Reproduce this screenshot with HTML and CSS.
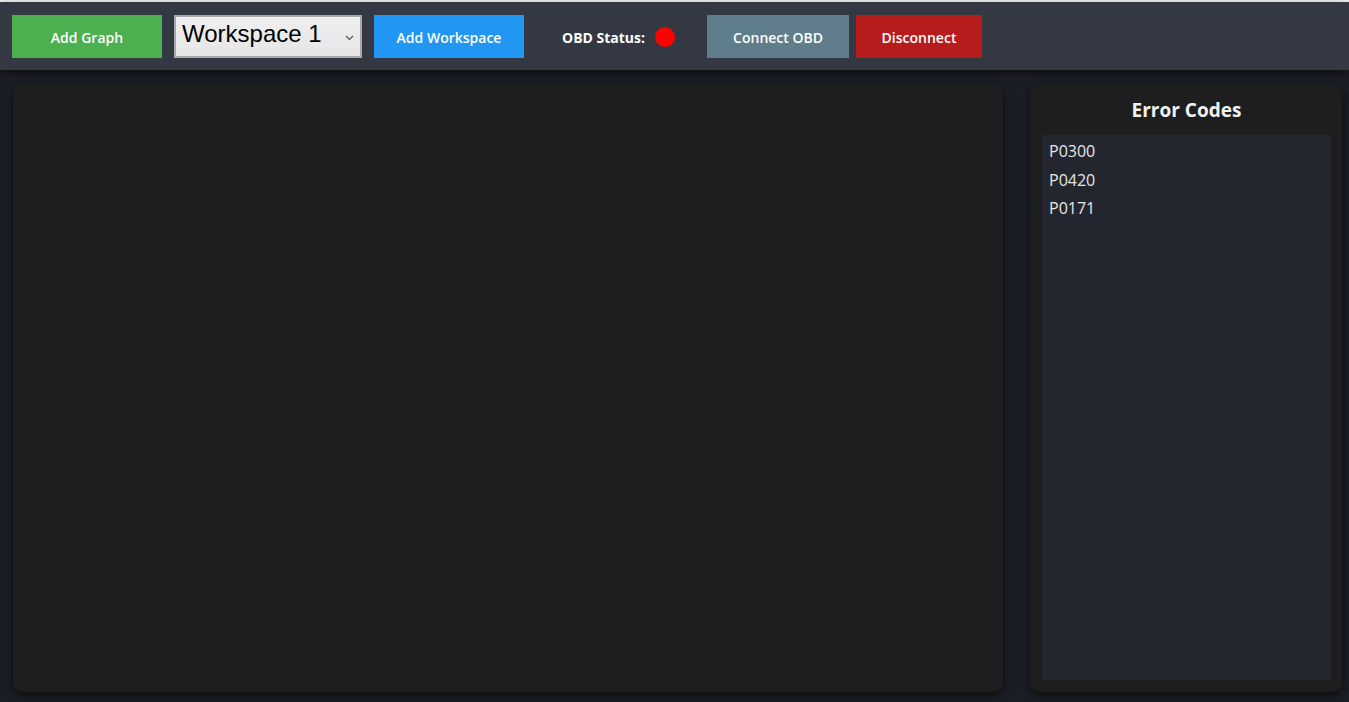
FILE: index.html
```html
<!DOCTYPE html>
<html lang="en">
<head>
<meta charset="utf-8">
<title>OBD Dashboard</title>
<link rel="stylesheet" href="styles.css">
</head>
<body>
<div class="topline"></div>
<header class="toolbar">
  <button class="btn btn-green">Add Graph</button>
  <div class="select-wrap">
    <select class="ws-select">
      <option>Workspace 1</option>
    </select>
    <svg class="chev" width="9" height="6" viewBox="0 0 9 6"><path d="M1 1 L4.5 4.5 L8 1" fill="none" stroke="#555" stroke-width="1.2"/></svg>
  </div>
  <button class="btn btn-blue">Add Workspace</button>
  <div class="status">
    <span class="status-label">OBD Status:</span>
    <span class="dot"></span>
  </div>
  <button class="btn btn-slate">Connect OBD</button>
  <button class="btn btn-red">Disconnect</button>
</header>
<main class="content">
  <section class="workspace"></section>
  <aside class="errors">
    <h2 class="errors-title">Error Codes</h2>
    <ul class="error-list">
      <li>P0300</li>
      <li>P0420</li>
      <li>P0171</li>
    </ul>
  </aside>
</main>
</body>
</html>
```
FILE: styles.css
```css
* { box-sizing: border-box; }
html, body { margin: 0; padding: 0; height: 100%; }
body {
  background: #1b1e25;
  font-family: "Open Sans", "Noto Sans", sans-serif;
  color: #fff;
  overflow: hidden;
}
.topline { height: 2px; background: #f4f4f4; }
.toolbar {
  height: 68px;
  background: #333842;
  display: flex;
  align-items: center;
  padding: 1px 12px 0 12px;
  box-shadow: 0 3px 8px rgba(0,0,0,0.55);
  position: relative;
  z-index: 1;
}
.btn {
  height: 43px;
  border: none;
  color: #fff;
  font-family: "Open Sans", sans-serif;
  font-weight: 600;
  font-size: 14px;
  padding: 2px 0 0 0;
  cursor: pointer;
}
.btn-green { background: #4caf50; width: 150px; }
.btn-blue { background: #2196f3; width: 150px; }
.btn-slate { background: #607d8b; width: 142px; }
.btn-red { background: #b71c1c; width: 126px; margin-left: 7px; }
.select-wrap { position: relative; margin: 0 12px; }
.ws-select {
  appearance: none;
  -webkit-appearance: none;
  width: 188px;
  height: 43px;
  background: linear-gradient(#efefef, #e6e6e6);
  border: 2px solid #a8a8a8;
  border-radius: 0;
  font-family: "Liberation Sans", Arial, sans-serif;
  font-size: 24px;
  color: #000;
  padding: 0 0 7px 6px;
  outline: none;
}
.chev { position: absolute; right: 8px; top: 20px; pointer-events: none; }
.status {
  display: flex;
  align-items: center;
  margin-left: 38px;
  margin-right: 32px;
}
.status-label { font-weight: 700; font-size: 14px; padding-top: 1px; }
.dot {
  width: 20px; height: 20px; border-radius: 50%;
  background: #ff0000; margin-left: 10px;
}
.content {
  display: flex;
  gap: 27px;
  padding: 14px 7px 0 13px;
  height: 622px;
}
.workspace {
  flex: 1;
  background: #1e1e1e;
  border-radius: 10px;
  box-shadow: 0 3px 10px rgba(0,0,0,0.6);
}
.errors {
  width: 312px;
  background: #1e1e1e;
  border-radius: 10px;
  box-shadow: 0 3px 10px rgba(0,0,0,0.6);
  padding: 13px 11px 12px 12px;
  display: flex;
  flex-direction: column;
}
.errors-title {
  margin: 0;
  text-align: center;
  font-size: 19px;
  font-weight: 700;
  line-height: 26px;
  color: #f2f2f2;
}
.error-list {
  list-style: none;
  margin: 12px 0 0 0;
  padding: 2px 7px;
  background: #23262e;
  flex: 1;
}
.error-list li {
  font-size: 16px;
  line-height: 28.5px;
  color: #e6e6e6;
}
```
